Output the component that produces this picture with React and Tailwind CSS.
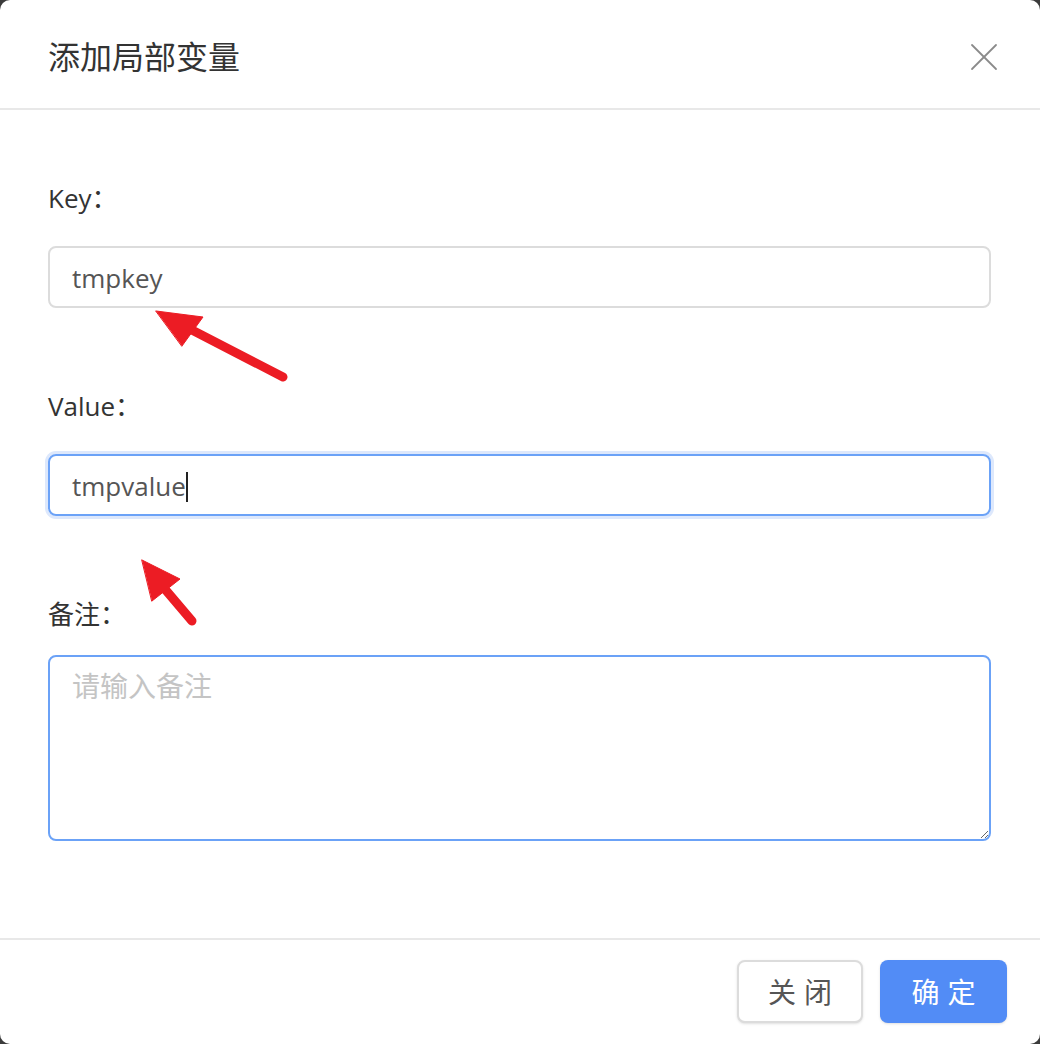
import React from "react";
import { X } from "lucide-react";

const font = { fontFamily: '"Open Sans", "Noto Sans CJK SC", sans-serif' };

function Label({ children }) {
  return <div className="h-9 leading-9 text-[26px] text-[#333]">{children}</div>;
}

function Arrows() {
  return (
    <svg className="absolute inset-0 pointer-events-none" width="1040" height="1044">
      <g fill="#ec1c24" stroke="#ec1c24" strokeLinecap="round">
        <line x1="283" y1="377" x2="190" y2="329" strokeWidth="9" />
        <polygon points="156,311 203,317 182,346" strokeWidth="1" strokeLinejoin="round" />
        <line x1="192" y1="621" x2="164" y2="588" strokeWidth="9" />
        <polygon points="142,560 180,579 152,601" strokeWidth="1" strokeLinejoin="round" />
      </g>
    </svg>
  );
}

export default function App() {
  return (
    <div className="bg-[#3b3b3b] w-[1040px] h-[1044px]" style={font}>
      <div className="relative bg-white rounded-[10px] h-full flex flex-col">
        <div className="h-[110px] border-b-2 border-[#e8e8e8] flex items-center justify-between pl-12 pr-[32px] pt-[6px]">
          <h1 className="text-[32px] text-[#333] font-normal">添加局部变量</h1>
          <X className="w-12 h-12 text-[#8a8a8a]" strokeWidth={0.9} />
        </div>

        <div className="flex-1 pl-12 pr-[49px] pt-[70px]">
          <Label>Key：</Label>
          <div className="mt-[30px] h-[62px] border-2 border-[#dcdcdc] rounded-lg px-[22px] pt-[3px] flex items-center text-[26px] text-[#555]">
            tmpkey
          </div>

          <div className="mt-[80px]">
            <Label>Value：</Label>
          </div>
          <div className="mt-[30px] h-[62px] border-2 border-[#6ba2f7] rounded-lg px-[22px] pt-[3px] flex items-center text-[26px] text-[#555] ring-[3px] ring-[#dde8fc]">
            tmpvalue
            <span className="inline-block w-[2px] h-[30px] bg-[#222]" />
          </div>

          <div className="mt-[80px]">
            <Label>备注：</Label>
          </div>
          <textarea
            className="mt-[23px] block w-full h-[186px] border-2 border-[#6ba2f7] rounded-lg px-[22px] py-[8px] text-[28px] text-[#555] placeholder:text-[#c4c4c4] outline-none"
            placeholder="请输入备注"
            style={font}
          />
        </div>

        <div className="border-t-2 border-[#e8e8e8] h-[106px] flex items-start justify-end gap-[17px] pt-[20px] pr-[33px]">
          <button className="w-[126px] h-[63px] border-2 border-[#dcdcdc] rounded-lg text-[28px] text-[#555] tracking-[8px] pl-[8px] shadow-sm bg-white">
            关闭
          </button>
          <button className="w-[127px] h-[63px] rounded-lg bg-[#528cf6] text-white text-[28px] tracking-[8px] pl-[8px] shadow-sm">
            确定
          </button>
        </div>

        <Arrows />
      </div>
    </div>
  );
}
